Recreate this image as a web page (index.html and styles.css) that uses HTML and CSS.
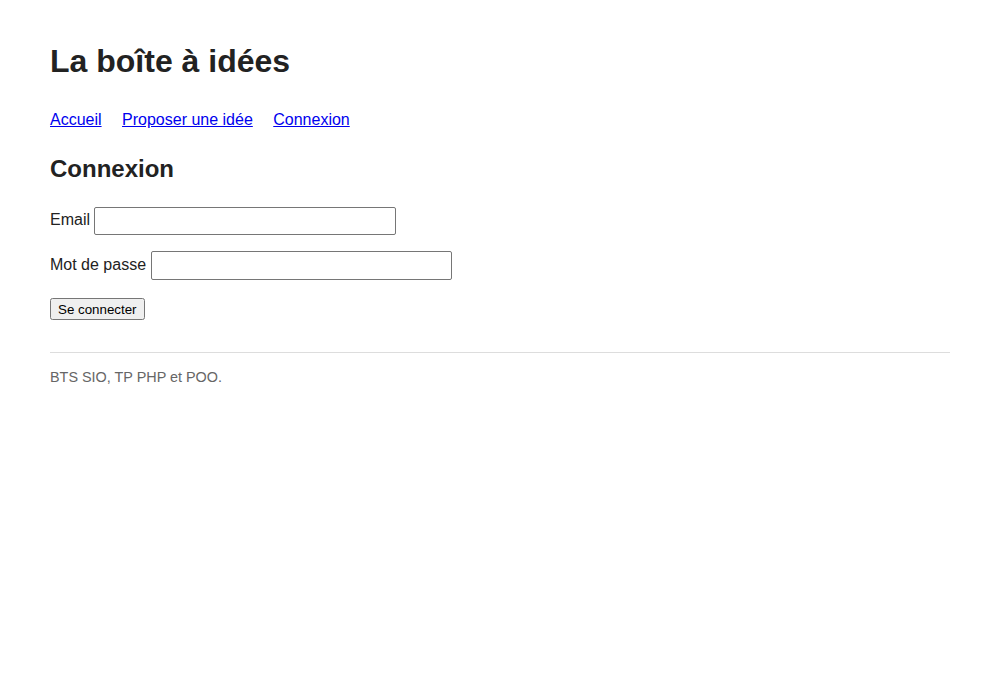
FILE: index.html
```html
<!DOCTYPE html>
<html lang="fr">
<head>
    <meta charset="UTF-8">
    <meta name="viewport" content="width=device-width, initial-scale=1.0">
    <title>Connexion - La boîte à idées</title>
    <link rel="stylesheet" href="styles.css">
</head>
<body>

<div class="page">
    <!-- En-tête -->
    <header class="header">
        <h1>La boîte à idées</h1>
        <nav>
            <a href="index.php">Accueil</a>
            <a href="proposer.php">Proposer une idée</a>
            <a href="connexion.php">Connexion</a>
        </nav>
    </header>

    <!-- Formulaire de connexion -->
    <main>
        <h2>Connexion</h2>
        <form method="post" action="connexion.php">
            <p class="field">
                <label for="email">Email</label>
                <input type="email" id="email" name="email">
            </p>
            <p class="field">
                <label for="password">Mot de passe</label>
                <input type="password" id="password" name="password">
            </p>
            <p class="actions">
                <button type="submit">Se connecter</button>
            </p>
        </form>
    </main>

    <!-- Pied de page -->
    <footer class="footer">
        <p>BTS SIO, TP PHP et POO.</p>
    </footer>
</div>

</body>
</html>
```

FILE: styles.css
```css
body {
    font-family: 'Liberation Sans', Arial, sans-serif;
    margin: 0;
    padding: 0;
    background-color: #fff;
    color: #222;
}

.page {
    max-width: 900px;
    margin: 0 auto;
    padding: 22px 0;
}

.header h1 {
    font-size: 32px;
    margin: 21px 0;
}

.header nav {
    margin: 31px 0 0;
}

.header nav a {
    color: #0000ee;
    margin-right: 16px;
}

main h2 {
    font-size: 24px;
    margin: 26px 0 24px;
}

.field {
    margin: 0 0 16px;
}

.field input {
    box-sizing: border-box;
    width: 302px;
    height: 28px;
    border: 1px solid #767676;
    border-radius: 2px;
    vertical-align: middle;
}

.field input[type="password"] {
    width: 301px;
    height: 29px;
}

.actions {
    margin: 18px 0 0;
}

.actions button {
    padding: 2px 6px 1px;
}

.footer {
    margin-top: 32px;
    border-top: 1px solid #ddd;
    padding-top: 6px;
}

.footer p {
    font-size: 14.4px;
    color: #666;
    margin: 10px 0;
}
```
